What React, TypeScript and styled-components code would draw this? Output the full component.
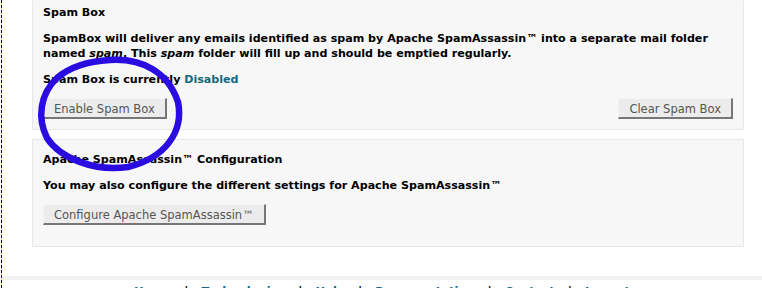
import styled, { createGlobalStyle } from "styled-components";

const GlobalStyle = createGlobalStyle`
  html, body {
    margin: 0;
    padding: 0;
    background: #ffffff;
    font-family: "DejaVu Sans", Verdana, sans-serif;
  }
`

const footerLinks = ['Home', 'Technologies', 'Help', 'Documentation', 'Contact', 'Logout']

const App = () => {
  return (
    <>
      <GlobalStyle />
      <Page>
        <Content>
          <Panel $first>
            <Title>Spam Box</Title>
            <Text>
              SpamBox will deliver any emails identified as spam by Apache SpamAssassin™ into a separate mail folder
              named <em>spam</em>. This <em>spam</em> folder will fill up and should be emptied regularly.
            </Text>
            <Text>
              Spam Box is currently <Status>Disabled</Status>
            </Text>
            <ButtonRow>
              <Button>Enable Spam Box</Button>
              <Button>Clear Spam Box</Button>
            </ButtonRow>
          </Panel>
          <Panel $tall>
            <Title>Apache SpamAssassin™ Configuration</Title>
            <Text>You may also configure the different settings for Apache SpamAssassin™</Text>
            <ButtonRow>
              <Button>Configure Apache SpamAssassin™</Button>
            </ButtonRow>
          </Panel>
        </Content>
        <Footer>
          {footerLinks.map((link, i) => (
            <span key={link}>
              {i > 0 && <Sep>|</Sep>}
              <FooterLink>{link}</FooterLink>
            </span>
          ))}
        </Footer>
        <Scribble viewBox="0 0 762 288" width="762" height="288">
          <path
            d="M 110 60 C 142 58, 168 72, 178 102 C 184 132, 165 158, 128 167 C 94 172, 60 158, 47 138 C 37 118, 40 94, 57 78 C 72 65, 92 61, 110 60 Z"
            fill="none"
            stroke="#2a0ce0"
            strokeWidth="6.5"
            strokeLinejoin="round"
          />
        </Scribble>
      </Page>
    </>
  )
};

export default App

const Page = styled.div`
  position: relative;
  width: 761px;
  height: 288px;
  overflow: hidden;
  box-sizing: border-box;
  margin-left: 1px;
  border-left: 1px dashed #000;
  background: linear-gradient(to right, #f2e24a 0 1px, #fff 1px);
  background-origin: border-box;
`

const Content = styled.div`
  padding: 0 18px 0 30px;
  display: flex;
  flex-direction: column;
  gap: 9px;
`

const Panel = styled.div<{ $first?: boolean; $tall?: boolean }>`
  background: #f7f7f7;
  border: 1px solid #e8e8e8;
  border-top-color: ${p => p.$first ? 'transparent' : '#e8e8e8'};
  padding: ${p => p.$first ? '4px' : '12px'} 10px ${p => p.$tall ? '21px' : '10px'} 10px;
  display: flex;
  flex-direction: column;
`

const Title = styled.div`
  font-size: 11.1px;
  font-weight: bold;
  color: #000;
  line-height: 15px;
  margin-bottom: 11px;
`

const Text = styled.div`
  font-size: 11.1px;
  font-weight: bold;
  color: #000;
  line-height: 15px;
  margin-bottom: 11px;
  em {
    font-style: italic;
  }
`

const Status = styled.span`
  color: #14697e;
`

const ButtonRow = styled.div`
  display: flex;
  justify-content: space-between;
  align-items: center;
`

const Button = styled.button`
  font-family: "DejaVu Sans", Verdana, sans-serif;
  font-size: 11.5px;
  color: #555;
  background: #ececec;
  border: 1px solid;
  border-color: #f4f4f4 #777 #777 #f4f4f4;
  border-right-width: 2px;
  border-bottom-width: 2px;
  padding: 2px 10px 1px 10px;
  height: 21px;
  line-height: 16px;
`

const Footer = styled.div`
  position: absolute;
  left: 0;
  right: 0;
  top: 276px;
  padding-top: 5px;
  border-top: 4px solid #f2f2f2;
  text-align: center;
  font-size: 11.5px;
  font-weight: bold;
  line-height: 15px;
  white-space: nowrap;
`

const FooterLink = styled.span`
  color: #14697e;
`

const Sep = styled.span`
  color: #000;
  margin: 0 13px;
`

const Scribble = styled.svg`
  position: absolute;
  left: -2px;
  top: 0;
  pointer-events: none;
`
